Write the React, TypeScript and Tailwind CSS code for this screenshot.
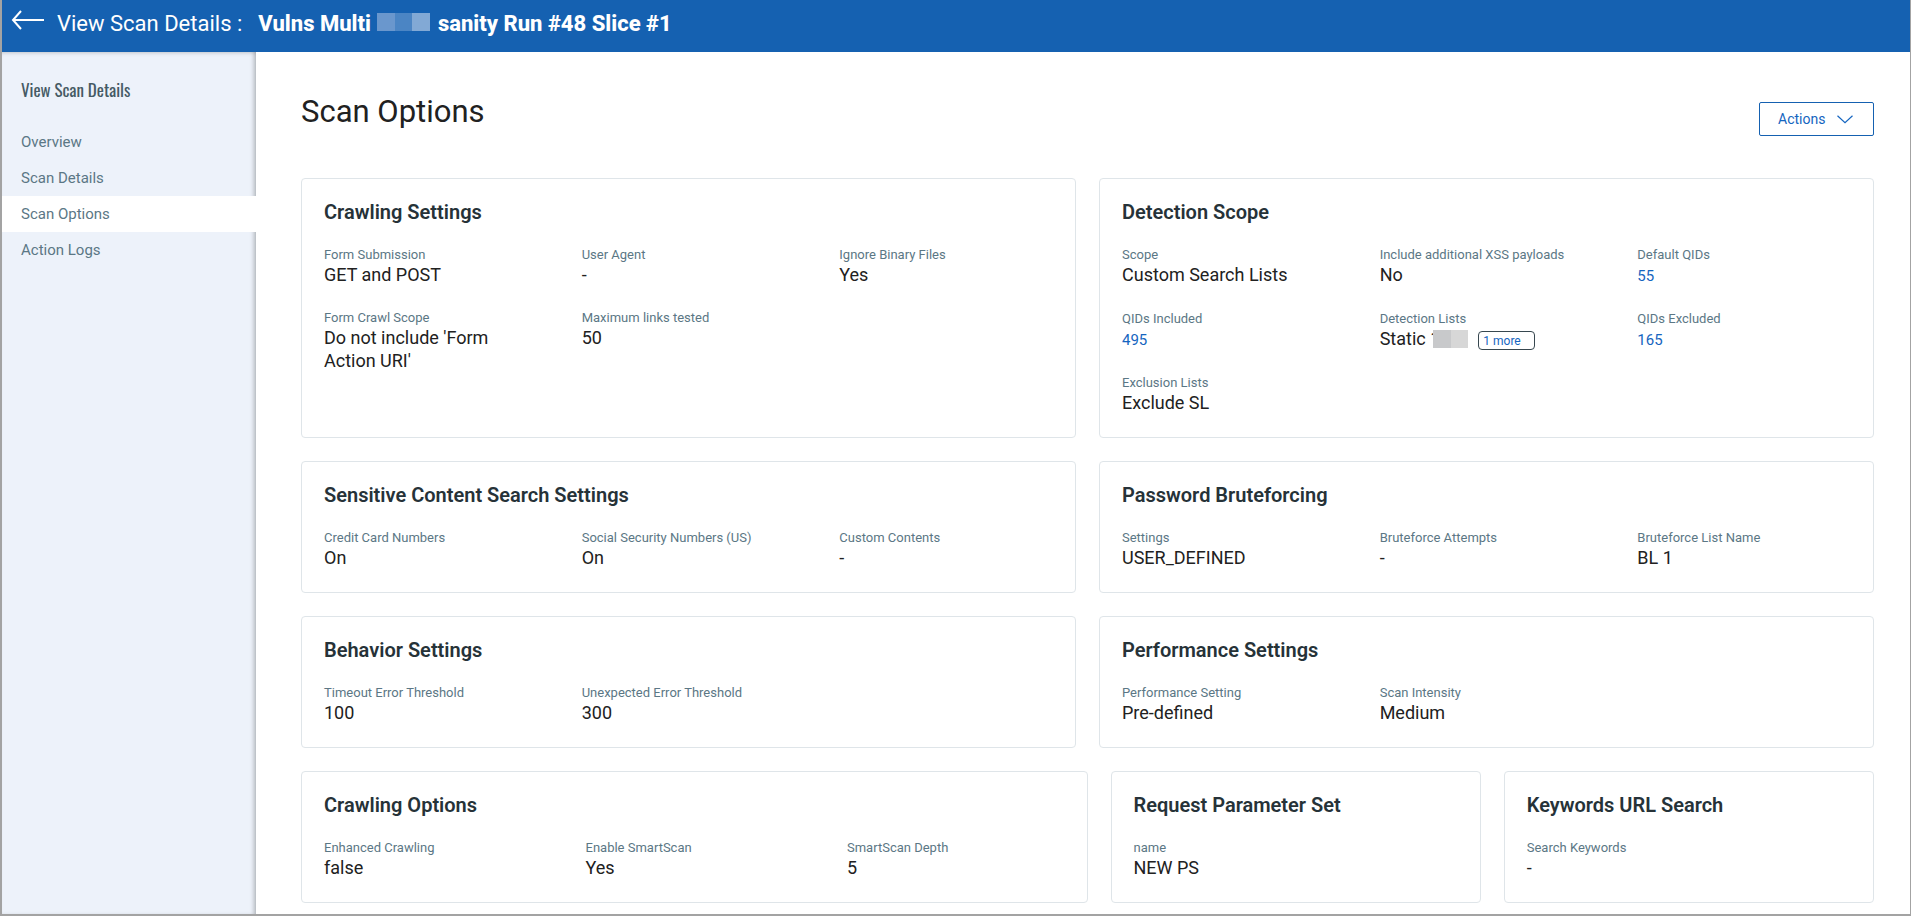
import React, { useState } from "react";

interface FieldProps {
  label: string;
  children: React.ReactNode;
}

interface CardProps {
  title: string;
  className?: string;
  single?: boolean;
  children: React.ReactNode;
}

const navItems = ["Overview", "Scan Details", "Scan Options", "Action Logs"];

const BackIcon: React.FC = () => (
  <svg width="34" height="20" viewBox="0 0 34 20" fill="none" stroke="white" strokeWidth="2">
    <path d="M11 1 L3 10 L11 19 M3 10 H34" />
  </svg>
);

const Field: React.FC<FieldProps> = ({ label, children }) => (
  <div className="px-[22px]">
    <dt className="text-[13px] leading-4 text-[#5b7785]">{label}</dt>
    <dd className="text-lg leading-[23px] text-[#212121]">{children}</dd>
  </div>
);

const QidLink: React.FC<{ count: number }> = ({ count }) => (
  <a href="#qids" className="block pt-0.5 text-[15px] leading-[22px] text-[#1565c0]">
    {count}
  </a>
);

const Card: React.FC<CardProps> = ({ title, className = "flex-1", single, children }) => (
  <section className={`min-w-0 rounded border border-[#dfe5e9] bg-white pb-[23px] ${className}`}>
    <h2 className="px-[22px] pt-[21px] text-xl leading-[25px] font-semibold text-[#263238]">{title}</h2>
    <dl className={`grid gap-y-6 pt-[22px] ${single ? "grid-cols-1" : "grid-cols-3"}`}>{children}</dl>
  </section>
);

const App: React.FC = () => {
  const [activeItem, setActiveItem] = useState("Scan Options");

  return (
    <div className="flex min-h-screen flex-col border-r border-b-2 border-l-2 border-[#a3a3a3] bg-white font-['Roboto',sans-serif]">
      <header className="flex h-[52px] items-center bg-[#1561b1] px-2 text-white">
        <button type="button" aria-label="Back" className="cursor-pointer pb-3">
          <BackIcon />
        </button>
        <h1 className="flex items-center pb-1 pl-[13px] text-[22px] leading-7 whitespace-pre">
          View Scan Details :
          <span className="pl-4 font-extrabold">Vulns Multi</span>
          <span className="mb-1 ml-1.5 flex h-[18px]">
            <span className="w-[18px] bg-[#6a97cd]"></span>
            <span className="w-[17px] bg-[#4b85c4]"></span>
            <span className="w-[18px] bg-[#82a9d5]"></span>
          </span>
          <span className="pl-2 font-extrabold">sanity Run #48 Slice #1</span>
        </h1>
      </header>

      <div className="flex flex-1">
        <aside className="w-[254px] shrink-0 bg-[#edf2fa] shadow-[inset_-4px_0_4px_-2px_rgba(0,0,0,0.25),inset_0_4px_4px_-3px_rgba(0,0,0,0.15)]">
          <p className="px-[19px] pt-[26px] pb-[22px] font-['Oswald','Roboto_Condensed','Liberation_Sans_Narrow','Roboto',sans-serif] text-[17px] leading-6 text-[#455a64]">
            View Scan Details
          </p>
          <nav>
            {navItems.map((item) => (
              <a
                key={item}
                href="#nav"
                onClick={() => setActiveItem(item)}
                className={`block px-[19px] text-[15px] leading-9 text-[#5b7785] ${activeItem === item ? "bg-white" : ""}`}
              >
                {item}
              </a>
            ))}
          </nav>
        </aside>

        <main className="flex min-w-0 flex-1 flex-col gap-[23px] pt-10 pr-9 pb-[11px] pl-[45px]">
          <div className="flex h-[63px] items-start justify-between">
            <h2 className="text-[31px] leading-10 text-[#212121]">Scan Options</h2>
            <button
              type="button"
              className="mt-2.5 flex h-[34px] w-[115px] cursor-pointer items-center gap-3 rounded-xs border border-[#1561b1] pl-[18px] text-sm text-[#1565c0]"
            >
              Actions
              <svg width="16" height="9" viewBox="0 0 16 9" fill="none" stroke="#1565c0" strokeWidth="1.2">
                <path d="M0.5 0.8 L8 7.8 L15.5 0.8" />
              </svg>
            </button>
          </div>

          <div className="flex gap-[23px]">
            <Card title="Crawling Settings">
              <Field label="Form Submission">GET and POST</Field>
              <Field label="User Agent">-</Field>
              <Field label="Ignore Binary Files">Yes</Field>
              <Field label="Form Crawl Scope">Do not include 'Form Action URI'</Field>
              <Field label="Maximum links tested">50</Field>
            </Card>
            <Card title="Detection Scope">
              <Field label="Scope">Custom Search Lists</Field>
              <Field label="Include additional XSS payloads">No</Field>
              <Field label="Default QIDs">
                <QidLink count={55} />
              </Field>
              <Field label="QIDs Included">
                <QidLink count={495} />
              </Field>
              <Field label="Detection Lists">
                <div className="flex items-center">
                  Static 1
                  <span className="z-10 -ml-[7px] flex h-[18px]">
                    <span className="w-[18px] bg-[#c8c9cb]"></span>
                    <span className="w-[17px] bg-[#d7d7d7]"></span>
                  </span>
                  <button
                    type="button"
                    className="mt-1 ml-2.5 h-[19px] w-[57px] cursor-pointer rounded-sm border border-[#37474f] pl-1 text-left text-xs leading-4 text-[#1565c0]"
                  >
                    1 more
                  </button>
                </div>
              </Field>
              <Field label="QIDs Excluded">
                <QidLink count={165} />
              </Field>
              <Field label="Exclusion Lists">Exclude SL</Field>
            </Card>
          </div>

          <div className="flex gap-[23px]">
            <Card title="Sensitive Content Search Settings">
              <Field label="Credit Card Numbers">On</Field>
              <Field label="Social Security Numbers (US)">On</Field>
              <Field label="Custom Contents">-</Field>
            </Card>
            <Card title="Password Bruteforcing">
              <Field label="Settings">USER_DEFINED</Field>
              <Field label="Bruteforce Attempts">-</Field>
              <Field label="Bruteforce List Name">BL 1</Field>
            </Card>
          </div>

          <div className="flex gap-[23px]">
            <Card title="Behavior Settings">
              <Field label="Timeout Error Threshold">100</Field>
              <Field label="Unexpected Error Threshold">300</Field>
            </Card>
            <Card title="Performance Settings">
              <Field label="Performance Setting">Pre-defined</Field>
              <Field label="Scan Intensity">Medium</Field>
            </Card>
          </div>

          <div className="flex gap-[23px]">
            <Card title="Crawling Options" className="w-1/2">
              <Field label="Enhanced Crawling">false</Field>
              <Field label="Enable SmartScan">Yes</Field>
              <Field label="SmartScan Depth">5</Field>
            </Card>
            <Card title="Request Parameter Set" single>
              <Field label="name">NEW PS</Field>
            </Card>
            <Card title="Keywords URL Search" single>
              <Field label="Search Keywords">-</Field>
            </Card>
          </div>
        </main>
      </div>
    </div>
  );
};

export default App;
